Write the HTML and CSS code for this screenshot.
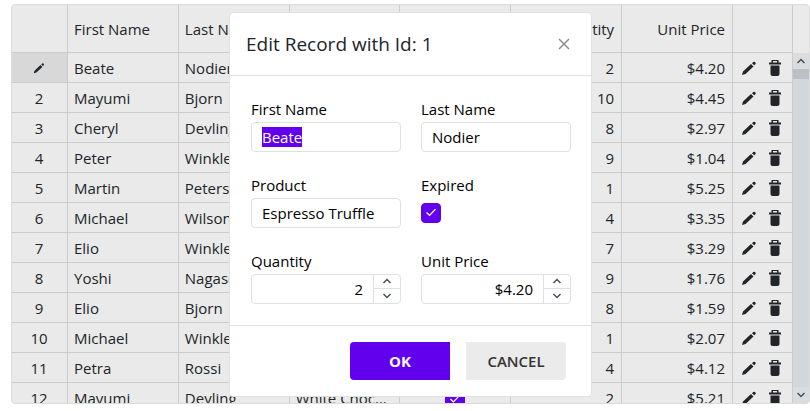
FILE: index.html
```html
<!DOCTYPE html>
<html lang="en">
<head>
    <meta charset="UTF-8">
    <title>Grid Editing</title>
    <link rel="stylesheet" href="styles.css">
</head>
<body>
<svg class="sprite" aria-hidden="true">
    <symbol id="icon-pencil" viewBox="0 0 16 16">
        <path d="M1 15l1-3.500 8-7.500 2.500 2.500-8 7.500zM11 3.200l1.300-1.200q.9-.7 1.700.1l.4.500q.8.9-.1 1.700l-1.100 1z"/>
    </symbol>
    <symbol id="icon-trash" viewBox="0 0 14 18">
        <path d="M3.500 1h7v2.500H13v2H1v-2h2.500zm1.500 1v1.500h4V2zM2.500 6.500h9V15q0 2-2 2h-5q-2 0-2-2z"/>
    </symbol>
    <symbol id="icon-up" viewBox="0 0 10 6">
        <path d="M1.500 5L5 1.500 8.500 5"/>
    </symbol>
    <symbol id="icon-down" viewBox="0 0 10 6">
        <path d="M1.500 1L5 4.500 8.500 1"/>
    </symbol>
</svg>

<div class="grid">
    <div class="grid-content">
        <table class="grid-table">
            <thead>
            <tr>
                <th class="col-number"></th>
                <th>First Name</th>
                <th>Last Name</th>
                <th>Product</th>
                <th class="center">Expired</th>
                <th class="right">Quantity</th>
                <th class="right">Unit Price</th>
                <th class="col-actions"></th>
            </tr>
            </thead>
            <tbody id="grid-rows"></tbody>
        </table>
    </div>
    <div class="grid-scroll">
        <div class="scroll-header"></div>
        <button class="scroll-button" type="button" aria-label="Scroll up">
            <svg class="arrow"><use href="#icon-up"/></svg>
        </button>
        <div class="scroll-track">
            <div class="scroll-thumb"></div>
        </div>
        <button class="scroll-button" type="button" aria-label="Scroll down">
            <svg class="arrow"><use href="#icon-down"/></svg>
        </button>
    </div>

    <div class="overlay">
        <form class="dialog" role="dialog" aria-labelledby="dialog-title">
            <header class="dialog-header">
                <h2 id="dialog-title">Edit Record with Id: 1</h2>
                <button class="close-button" type="button" aria-label="Close">
                    <svg viewBox="0 0 12 12"><path d="M1 1l10 10M11 1L1 11"/></svg>
                </button>
            </header>
            <div class="dialog-body">
                <div class="field">
                    <label for="first-name">First Name</label>
                    <input class="text-input" type="text" id="first-name" value="Beate">
                </div>
                <div class="field">
                    <label for="last-name">Last Name</label>
                    <input class="text-input" type="text" id="last-name" value="Nodier">
                </div>
                <div class="field">
                    <label for="product">Product</label>
                    <input class="text-input" type="text" id="product" value="Espresso Truffle">
                </div>
                <div class="field">
                    <label for="expired">Expired</label>
                    <input class="check check-field" type="checkbox" id="expired" checked>
                </div>
                <div class="field">
                    <label for="quantity">Quantity</label>
                    <div class="number-input">
                        <input type="text" id="quantity" value="2">
                        <div class="spin">
                            <button type="button" aria-label="Increase quantity"><svg class="arrow"><use href="#icon-up"/></svg></button>
                            <button type="button" aria-label="Decrease quantity"><svg class="arrow"><use href="#icon-down"/></svg></button>
                        </div>
                    </div>
                </div>
                <div class="field">
                    <label for="unit-price">Unit Price</label>
                    <div class="number-input">
                        <input type="text" id="unit-price" value="$4.20">
                        <div class="spin">
                            <button type="button" aria-label="Increase price"><svg class="arrow"><use href="#icon-up"/></svg></button>
                            <button type="button" aria-label="Decrease price"><svg class="arrow"><use href="#icon-down"/></svg></button>
                        </div>
                    </div>
                </div>
            </div>
            <footer class="dialog-footer">
                <button class="button primary" type="button">OK</button>
                <button class="button" type="button">CANCEL</button>
            </footer>
        </form>
    </div>
</div>

<script>
    const records = [
        ['Beate', 'Nodier', 'Espresso Truffle', true, 2, 4.20],
        ['Mayumi', 'Bjorn', 'Green Tea', false, 10, 4.45],
        ['Cheryl', 'Devling', 'Caramel Latte', true, 8, 2.97],
        ['Peter', 'Winkler', 'Caffe Latte', false, 9, 1.04],
        ['Martin', 'Petersen', 'Black Tea', true, 1, 5.25],
        ['Michael', 'Wilson', 'Caffe Americano', false, 4, 3.35],
        ['Elio', 'Winkler', 'Cappuccino', true, 7, 3.29],
        ['Yoshi', 'Nagase', 'Espresso con Panna', true, 9, 1.76],
        ['Elio', 'Bjorn', 'Doubleshot Espresso', false, 8, 1.59],
        ['Michael', 'Winkler', 'Green Tea', true, 1, 2.07],
        ['Petra', 'Rossi', 'Caffe Espresso', false, 4, 4.12],
        ['Mayumi', 'Devling', 'White Chocolate Mocha', true, 2, 5.21]
    ];

    const icon = name => `<svg class="icon ${name}"><use href="#icon-${name}"/></svg>`;

    // The first row is the one being edited
    document.getElementById('grid-rows').innerHTML = records.map((record, index) => {
        const [first, last, product, expired, quantity, price] = record;
        const number = index + 1;
        return `<tr>
            <td class="center ${index === 0 ? 'editing' : ''}">${index === 0 ? icon('pencil') : number}</td>
            <td>${first}</td>
            <td>${last}</td>
            <td>${product}</td>
            <td class="center"><input class="check" type="checkbox" aria-label="Expired ${number}" ${expired ? 'checked' : ''}></td>
            <td class="right">${quantity}</td>
            <td class="right">$${price.toFixed(2)}</td>
            <td><div class="actions">
                <button type="button" aria-label="Edit row ${number}">${icon('pencil')}</button>
                <button type="button" aria-label="Delete row ${number}">${icon('trash')}</button>
            </div></td>
        </tr>`;
    }).join('');

    const firstName = document.getElementById('first-name');
    firstName.focus();
    firstName.select();
</script>
</body>
</html>
```
FILE: styles.css
```css
* {
    box-sizing: border-box;
}

body {
    margin: 0;
    padding: 4px 0 7px 11px;
    height: 100vh;
    background: #fff;
    color: #212529;
    font-family: "Segoe UI", "Open Sans", "Noto Sans", sans-serif;
    font-size: 15px;
    line-height: 22px;
    overflow: hidden;
}

button, input {
    font: inherit;
    color: inherit;
    margin: 0;
    padding: 0;
}

button {
    border: none;
    background: none;
    cursor: pointer;
}

.sprite {
    display: none;
}

.grid {
    position: relative;
    display: flex;
    height: 100%;
    border: 1px solid #dcdcdc;
    border-radius: 4px;
    background: #eaeaea;
}

.grid-content {
    flex: 1;
    min-width: 0;
    overflow: hidden;
}

.grid-table {
    width: 100%;
    table-layout: fixed;
    border-collapse: separate;
    border-spacing: 0;
}

.grid-table th, .grid-table td {
    height: 30px;
    padding: 0 7px 0 6px;
    border-right: 1px solid #cbcbcb;
    border-bottom: 1px solid #cbcbcb;
    font-weight: normal;
    text-align: left;
    white-space: nowrap;
    overflow: hidden;
    text-overflow: ellipsis;
}

.grid-table th {
    height: 48px;
}

.grid-table .col-number {
    width: 56px;
}

.grid-table .col-actions {
    width: 60px;
}

.grid-table .center {
    text-align: center;
}

.grid-table .right {
    text-align: right;
}

.grid-table .editing {
    background: #d8d8d8;
}

.icon {
    display: block;
    width: 16px;
    height: 16px;
    fill: #212529;
}

.icon.trash {
    width: 14px;
    height: 18px;
}

.editing .icon {
    width: 12px;
    height: 12px;
    margin: 0 auto;
}

.actions {
    display: flex;
    justify-content: space-between;
    align-items: center;
    padding: 0 3px 0 2px;
}

/* Scrollbar */
.grid-scroll {
    display: flex;
    flex-direction: column;
    width: 16px;
}

.scroll-header {
    height: 48px;
}

.scroll-button {
    display: flex;
    align-items: center;
    justify-content: center;
    height: 16px;
    background: #d9dde0;
}

.scroll-track {
    flex: 1;
    background: #d3d7da;
}

.scroll-thumb {
    height: 10px;
    background: #bbc0c7;
}

.arrow {
    display: block;
    width: 10px;
    height: 6px;
    fill: none;
    stroke: #495057;
    stroke-width: 1.5;
}

/* Edit dialog */
.overlay {
    position: absolute;
    inset: 0;
    display: grid;
    place-items: center;
}

.dialog {
    border: 1px solid #dee2e6;
    border-radius: 4px;
    background: #fff;
}

.dialog-header {
    display: flex;
    align-items: center;
    justify-content: space-between;
    height: 63px;
    padding: 0 21px 0 16px;
    border-bottom: 1px solid #dee2e6;
}

.dialog-header h2 {
    margin: 0;
    font-size: 19px;
    font-weight: normal;
}

.close-button svg {
    display: block;
    width: 12px;
    height: 12px;
    fill: none;
    stroke: #909090;
    stroke-width: 1.5;
}

.dialog-body {
    display: grid;
    grid-template-columns: 150px 150px;
    gap: 22px 20px;
    padding: 22px 20px 21px 21px;
    color: #000;
}

.field {
    display: flex;
    flex-direction: column;
    gap: 2px;
}

.text-input, .number-input {
    width: 100%;
    height: 30px;
    border: 1px solid #dee0e2;
    border-radius: 4px;
    background: #fff;
}

.text-input {
    padding: 0 10px;
    outline: none;
}

.text-input::selection {
    background: #6200ee;
    color: #fff;
}

.number-input {
    display: flex;
    overflow: hidden;
}

.number-input input {
    flex: 1;
    min-width: 0;
    padding: 0 10px;
    border: none;
    outline: none;
    background: none;
    text-align: right;
}

.spin {
    display: flex;
    flex-direction: column;
    width: 27px;
    border-left: 1px solid #dee0e2;
}

.spin button {
    flex: 1;
    display: flex;
    align-items: center;
    justify-content: center;
}

.spin button + button {
    border-top: 1px solid #dee0e2;
}

.check {
    appearance: none;
    display: inline-block;
    width: 20px;
    height: 20px;
    border: 1px solid #ccc;
    border-radius: 4px;
    background: #fff;
    vertical-align: middle;
}

.check:checked {
    display: inline-grid;
    place-items: center;
    border-color: #6200ee;
    background: #6200ee;
}

.check:checked::before {
    content: "";
    width: 10px;
    height: 8px;
    background: #fff;
    clip-path: polygon(0 56%, 10% 44%, 36% 76%, 90% 4%, 100% 14%, 36% 98%);
}

.check-field {
    margin-top: 5px;
}

.dialog-footer {
    display: flex;
    justify-content: flex-end;
    gap: 16px;
    padding: 16px 25px 16px;
    border-top: 1px solid #dee2e6;
}

.button {
    width: 100px;
    height: 38px;
    border-radius: 0 4px 4px 0;
    background: #ebebeb;
    color: #333;
    font-weight: 600;
}

.button.primary {
    border-radius: 4px 0 0 4px;
    background: #6200ee;
    color: #fff;
    font-weight: bold;
}
```
